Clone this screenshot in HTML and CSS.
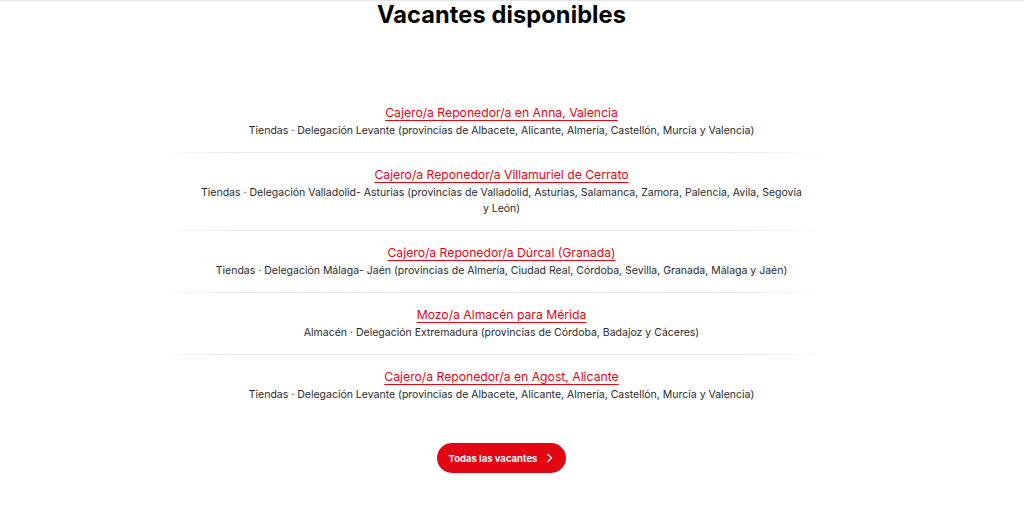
FILE: index.html
```html
<!DOCTYPE html>
<html lang="es">
<head>
<meta charset="utf-8">
<title>Vacantes disponibles</title>
<link rel="stylesheet" href="styles.css">
</head>
<body>
<div class="topline"></div>
<main class="page">
  <h2 class="title">Vacantes disponibles</h2>
  <ul class="jobs">
    <li class="job">
      <div class="job-head"><a class="job-link" href="#">Cajero/a Reponedor/a en Anna, Valencia</a></div>
      <p class="job-meta">Tiendas · Delegación Levante (provincias de Albacete, Alicante, Almería, Castellón, Murcia y Valencia)</p>
    </li>
    <li class="job">
      <div class="job-head"><a class="job-link" href="#">Cajero/a Reponedor/a Villamuriel de Cerrato</a></div>
      <p class="job-meta">Tiendas · Delegación Valladolid- Asturias (provincias de Valladolid, Asturias, Salamanca, Zamora, Palencia, Avila, Segovia y León)</p>
    </li>
    <li class="job">
      <div class="job-head"><a class="job-link" href="#">Cajero/a Reponedor/a Dúrcal (Granada)</a></div>
      <p class="job-meta">Tiendas · Delegación Málaga- Jaén (provincias de Almería, Ciudad Real, Córdoba, Sevilla, Granada, Málaga y Jaén)</p>
    </li>
    <li class="job">
      <div class="job-head"><a class="job-link" href="#">Mozo/a Almacén para Mérida</a></div>
      <p class="job-meta">Almacén · Delegación Extremadura (provincias de Córdoba, Badajoz y Cáceres)</p>
    </li>
    <li class="job">
      <div class="job-head"><a class="job-link" href="#">Cajero/a Reponedor/a en Agost, Alicante</a></div>
      <p class="job-meta">Tiendas · Delegación Levante (provincias de Albacete, Alicante, Almería, Castellón, Murcia y Valencia)</p>
    </li>
  </ul>
  <a class="btn" href="#">Todas las vacantes
    <svg class="chev" width="8" height="10" viewBox="0 0 8 10"><path d="M2 1.5 L5.5 5 L2 8.5" fill="none" stroke="#fff" stroke-width="1.4" stroke-linecap="round" stroke-linejoin="round"/></svg>
  </a>
</main>
</body>
</html>
```
FILE: styles.css
```css
html, body {
  margin: 0;
  padding: 0;
  background: #fff;
}
body {
  font-family: Inter, "Noto Sans", sans-serif;
  color: #2b2b2b;
}
.topline {
  height: 1px;
  background: #e6e6e6;
}
.page {
  width: 1003px;
  display: flex;
  flex-direction: column;
  align-items: center;
}
.title {
  margin: 0;
  font-size: 23.6px;
  line-height: 28px;
  font-weight: 700;
  color: #000;
  letter-spacing: 0.1px;
}
.jobs {
  list-style: none;
  margin: 62px 0 0;
  padding: 0;
  width: 655px;
}
.job {
  padding: 13px 24px 13px;
  text-align: center;
  border-bottom: 1px solid transparent;
  border-image: linear-gradient(90deg, rgba(225,225,225,0.2), #e8e8e8 10%, #e8e8e8 85%, rgba(225,225,225,0)) 1;
}
.job:last-child {
  border-bottom: 0;
  border-image: none;
}
.job-head {
  font-size: 12.2px;
  line-height: 18px;
  height: 18px;
}
.job-link {
  color: #e30613;
  text-decoration: underline;
  text-decoration-thickness: 1px;
  text-underline-offset: 3px;
}
.job-meta {
  margin: 0;
  padding-top: 1px;
  font-size: 10.5px;
  line-height: 16px;
  color: #2b2b2b;
}
.btn {
  margin-top: 27px;
  height: 30px;
  width: 129px;
  box-sizing: border-box;
  border-radius: 15px;
  background: #e30613;
  color: #fff;
  text-decoration: none;
  font-size: 9.5px;
  font-weight: 700;
  display: flex;
  align-items: center;
  justify-content: center;
  gap: 9px;
}
.chev {
  display: block;
}
```
